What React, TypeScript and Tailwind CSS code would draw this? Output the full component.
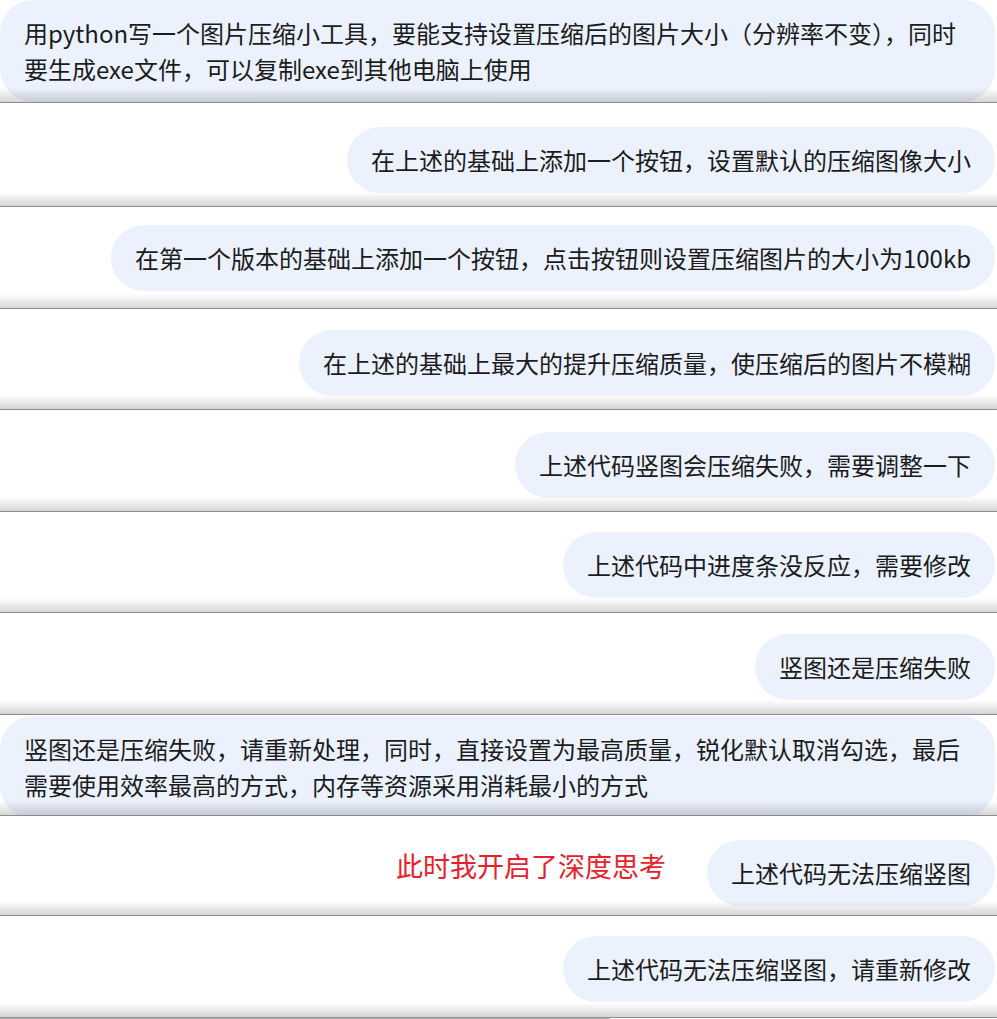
import React from "react";

const FONT = { fontFamily: '"Microsoft YaHei", "Noto Sans CJK SC", "Noto Sans", sans-serif' };

function Bubble({ children, full = false }: { children: React.ReactNode; full?: boolean }) {
  return (
    <div
      className={`bg-[#ebf1fd] text-[#1c1c1c] text-[24px] leading-[36px] px-6 py-[15px] rounded-[33px] whitespace-nowrap ${full ? "w-full" : ""}`}
    >
      {children}
    </div>
  );
}

function Strip({ h, top, children }: { h: string; top: string; children: React.ReactNode }) {
  return (
    <div className={`relative overflow-hidden ${h}`}>
      <div className={`flex justify-end items-start pr-[2px] ${top}`}>{children}</div>
      <div className="pointer-events-none absolute inset-x-0 bottom-[1px] h-[14px] bg-linear-to-b from-[rgba(0,0,0,0)] to-[rgba(0,0,0,0.16)]" />
      <div className="absolute inset-x-0 bottom-0 h-[1px] bg-[#8c8c8c]" />
    </div>
  );
}

export default function App() {
  return (
    <div className="w-[997px] h-[1019px] bg-white overflow-hidden" style={FONT}>
      <Strip h="h-[103px]" top="pt-0">
        <Bubble full>
          用python写一个图片压缩小工具，要能支持设置压缩后的图片大小（分辨率不变），同时
          <br />
          要生成exe文件，可以复制exe到其他电脑上使用
        </Bubble>
      </Strip>
      <Strip h="h-[104px]" top="pt-[24px]">
        <Bubble>在上述的基础上添加一个按钮，设置默认的压缩图像大小</Bubble>
      </Strip>
      <Strip h="h-[102px]" top="pt-[18px]">
        <Bubble>在第一个版本的基础上添加一个按钮，点击按钮则设置压缩图片的大小为100kb</Bubble>
      </Strip>
      <Strip h="h-[101px]" top="pt-[21px]">
        <Bubble>在上述的基础上最大的提升压缩质量，使压缩后的图片不模糊</Bubble>
      </Strip>
      <Strip h="h-[102px]" top="pt-[22px]">
        <Bubble>上述代码竖图会压缩失败，需要调整一下</Bubble>
      </Strip>
      <Strip h="h-[101px]" top="pt-[20px]">
        <Bubble>上述代码中进度条没反应，需要修改</Bubble>
      </Strip>
      <Strip h="h-[102px]" top="pt-[21px]">
        <Bubble>竖图还是压缩失败</Bubble>
      </Strip>
      <Strip h="h-[101px]" top="pt-[1px]">
        <Bubble full>
          竖图还是压缩失败，请重新处理，同时，直接设置为最高质量，锐化默认取消勾选，最后
          <br />
          需要使用效率最高的方式，内存等资源采用消耗最小的方式
        </Bubble>
      </Strip>
      <Strip h="h-[100px]" top="pt-[24px]">
        <div className="mt-[8px] mr-[41px] text-[27px] leading-[36px] text-[#e8202a] whitespace-nowrap">
          此时我开启了深度思考
        </div>
        <Bubble>上述代码无法压缩竖图</Bubble>
      </Strip>
      <Strip h="h-[102px]" top="pt-[20px]">
        <Bubble>上述代码无法压缩竖图，请重新修改</Bubble>
      </Strip>
      <div className="h-[1px] w-[610px] bg-[#b5b5b5]" />
    </div>
  );
}
